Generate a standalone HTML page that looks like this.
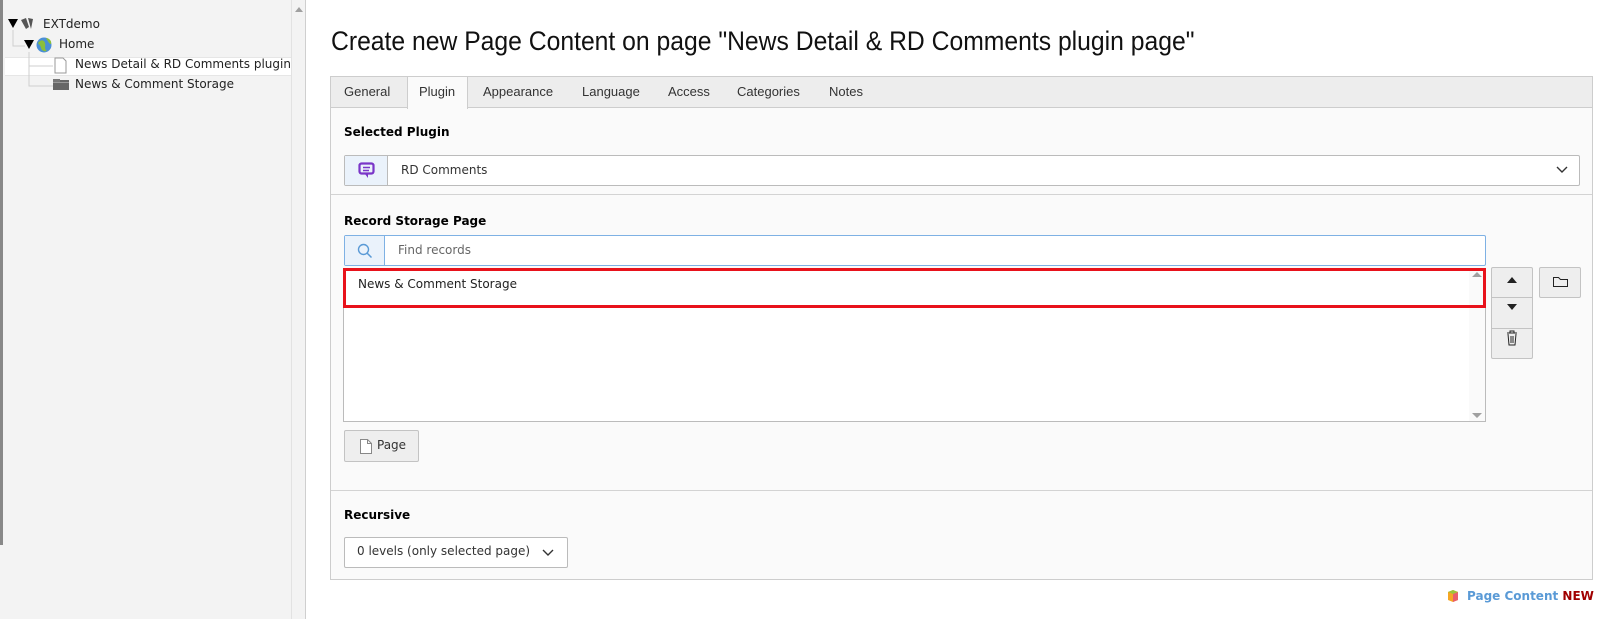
<!DOCTYPE html>
<html><head><meta charset="utf-8"><style>
*{box-sizing:border-box;margin:0;padding:0}
body{width:1613px;height:619px;overflow:hidden;background:#fff;font-family:"DejaVu Sans","Liberation Sans",sans-serif;font-size:12px;color:#333;position:relative}
.abs{position:absolute}
.side{left:0;top:0;width:306px;height:619px;background:#f3f3f3;border-right:1px solid #cfcfcf}
.side .lb{left:0;top:0;width:3px;height:545px;background:#888}
.sb{left:291px;top:0;width:14px;height:619px;background:#f3f3f3;border-left:1px solid #e2e2e2}
.tree{left:0;top:0;width:291px;height:110px;overflow:hidden}
.t{font-size:12px;color:#222;white-space:nowrap}
.panel{left:330px;top:76px;width:1263px;height:504px;border:1px solid #cdcdcd;background:#fafafa}
.tabs{left:0;top:0;width:100%;height:31px;background:#ededed;border-bottom:1px solid #cdcdcd}
.tab{top:0;height:31px;line-height:30px;font-family:"Liberation Sans",sans-serif;font-size:13px;color:#333}
.lab{font-weight:bold;font-size:12px;color:#000}
.box{background:#fff;border:1px solid #bbb;border-radius:2px}
.btn{background:#eee;border:1px solid #c3c3c3;border-radius:2px}
</style></head><body>
<div class="abs side"><div class="abs lb"></div></div>
<div class="abs sb"><svg class="abs" style="left:2px;top:6px" width="10" height="6"><path d="M1 6L5 1L9 6Z" fill="#a0a0a0"/></svg></div>
<div class="abs tree">
<div class="abs" style="left:5px;top:57px;width:286px;height:19px;background:#fff;border-top:1px solid #e6e6e6;border-bottom:1px solid #e6e6e6"></div>
<svg class="abs" style="left:0;top:0" width="290" height="100">
<path d="M8 19h10l-5 9z" fill="#000"/>
<path d="M13 30v16h12M29 52v34h24M29 66h24" stroke="#cfcfcf" fill="none"/>
<path d="M24 40h10l-5 9z" fill="#000"/>
<path d="M21 20l5 -2 3 9 -3 2z M28 18l5 1 -2 10z" fill="#555"/>
<circle cx="44" cy="45" r="7.5" fill="#4a8fd6"/><path d="M38 43c3-4 6-3 7 0s-1 5 1 7-4 2-5-2-2-3-3-5zM46 38c3 0 6 3 5 6-2 0-3-3-5-6z" fill="#8bbf3a"/>
<path d="M55 58h8l3 3v12h-11z" fill="#fff" stroke="#999"/>
<rect x="53" y="80" width="16" height="10" fill="#666"/><rect x="53" y="79" width="7" height="3" fill="#777"/><rect x="53" y="82" width="16" height="1" fill="#999"/>
</svg>
<div class="abs t" style="left:43px;top:17px">EXTdemo</div>
<div class="abs t" style="left:59px;top:37px">Home</div>
<div class="abs t" style="left:75px;top:57px">News Detail &amp; RD Comments plugin page</div>
<div class="abs t" style="left:75px;top:77px">News &amp; Comment Storage</div>
</div>
<div class="abs" style="left:331px;top:26px;font-family:'Liberation Sans Narrow','Liberation Sans',sans-serif;font-size:27px;color:#111;white-space:nowrap;transform:scaleX(0.915);transform-origin:left">Create new Page Content on page "News Detail &amp; RD Comments plugin page"</div>
<div class="abs panel">
 <div class="abs tabs"></div>
 <div class="abs" style="left:76px;top:-1px;width:61px;height:33px;background:#fafafa;border:1px solid #cdcdcd;border-bottom:none"></div>
 <div class="abs tab" style="left:13px">General</div>
 <div class="abs tab" style="left:88px">Plugin</div>
 <div class="abs tab" style="left:152px">Appearance</div>
 <div class="abs tab" style="left:251px">Language</div>
 <div class="abs tab" style="left:337px">Access</div>
 <div class="abs tab" style="left:406px">Categories</div>
 <div class="abs tab" style="left:498px">Notes</div>
 <div class="abs lab" style="left:13px;top:48px">Selected Plugin</div>
 <div class="abs box" style="left:13px;top:78px;width:1236px;height:31px"></div>
 <div class="abs" style="left:14px;top:79px;width:43px;height:29px;background:#eaf2fb;border-right:1px solid #bbb"></div>
 <svg class="abs" style="left:27px;top:85px" width="18" height="18"><rect x="1.5" y="1.5" width="14" height="10" rx="2" fill="none" stroke="#7a35c8" stroke-width="2.2"/><path d="M5 5.5h7M5 8.5h6" stroke="#7a35c8" stroke-width="1.6"/><path d="M7 12l3 4v-4z" fill="#7a35c8"/></svg>
 <div class="abs" style="left:70px;top:86px;font-size:12px">RD Comments</div>
 <svg class="abs" style="left:1225px;top:89px" width="12" height="8"><path d="M1 1l5 5 5-5" stroke="#333" stroke-width="1.4" fill="none"/></svg>
 <div class="abs" style="left:0;top:117px;width:100%;height:1px;background:#d3d3d3"></div>
 <div class="abs lab" style="left:13px;top:137px">Record Storage Page</div>
 <div class="abs box" style="left:13px;top:158px;width:1142px;height:31px;border-color:#7eb1e4"></div>
 <div class="abs" style="left:14px;top:159px;width:40px;height:29px;background:#eaf2fb;border-right:1px solid #7eb1e4"></div>
 <svg class="abs" style="left:26px;top:166px" width="16" height="16"><circle cx="6.5" cy="6.5" r="5" fill="none" stroke="#5a9ad6" stroke-width="1.4"/><path d="M10 10l4.5 4.5" stroke="#5a9ad6" stroke-width="1.5"/></svg>
 <div class="abs" style="left:67px;top:166px;font-size:12px;color:#666">Find records</div>
 <div class="abs box" style="left:12px;top:191px;width:1143px;height:154px;border-radius:0"></div>
 <div class="abs" style="left:1138px;top:192px;width:16px;height:152px;background:#fafafa"></div>
 <svg class="abs" style="left:1140px;top:194px" width="12" height="150"><path d="M1 6l5-5 5 5z M1 142l5 5 5-5z" fill="#a0a0a0"/></svg>
 <div class="abs" style="left:12px;top:191px;width:1143px;height:40px;border:3px solid #e8121b"></div>
 <div class="abs" style="left:27px;top:200px;font-size:12px;color:#222">News &amp; Comment Storage</div>
 <div class="abs btn" style="left:1160px;top:190px;width:42px;height:92px"></div>
 <div class="abs" style="left:1161px;top:220px;width:40px;height:1px;background:#c3c3c3"></div>
 <div class="abs" style="left:1161px;top:251px;width:40px;height:1px;background:#c3c3c3"></div>
 <svg class="abs" style="left:1173px;top:195px" width="16" height="85"><path d="M3 11l5-6 5 6z M3 32l5 6 5-6z" fill="#222"/><path d="M3 61h10M6 61v-2h4v2M4 62l1 11h6l1-11M7 64v7M9 64v7" stroke="#222" fill="none"/></svg>
 <div class="abs btn" style="left:1208px;top:190px;width:42px;height:31px"></div>
 <svg class="abs" style="left:1221px;top:197px" width="17" height="15"><path d="M1.5 3.5v9h14v-7h-7l-2-2z" fill="none" stroke="#222"/></svg>
 <div class="abs btn" style="left:13px;top:353px;width:75px;height:32px"></div>
 <svg class="abs" style="left:28px;top:361px" width="14" height="17"><path d="M1.5 1.5h7l4 4v10h-11z" fill="#fff" stroke="#888"/><path d="M8.5 1.5v4h4" fill="none" stroke="#888"/></svg>
 <div class="abs" style="left:46px;top:361px;font-size:12px">Page</div>
 <div class="abs" style="left:0;top:413px;width:100%;height:1px;background:#d3d3d3"></div>
 <div class="abs lab" style="left:13px;top:431px">Recursive</div>
 <div class="abs box" style="left:13px;top:460px;width:224px;height:31px"></div>
 <div class="abs" style="left:26px;top:467px;font-size:12px">0 levels (only selected page)</div>
 <svg class="abs" style="left:211px;top:472px" width="12" height="8"><path d="M1 1l5 5 5-5" stroke="#333" stroke-width="1.4" fill="none"/></svg>
</div>
<svg class="abs" style="left:1446px;top:589px" width="14" height="14"><path d="M2 3l5-2 5 2v8l-5 2-5-2z" fill="#f6a623"/><path d="M7 5v8l5-2V3z" fill="#e95e6b"/><path d="M2 3l5 2 5-2-5-2z" fill="#9bc43a"/></svg>
<div class="abs" style="left:1467px;top:589px;font-size:12px;font-weight:bold;white-space:nowrap"><span style="color:#5a9ad6">Page Content</span> <span style="color:#a00000">NEW</span></div>
</body></html>
